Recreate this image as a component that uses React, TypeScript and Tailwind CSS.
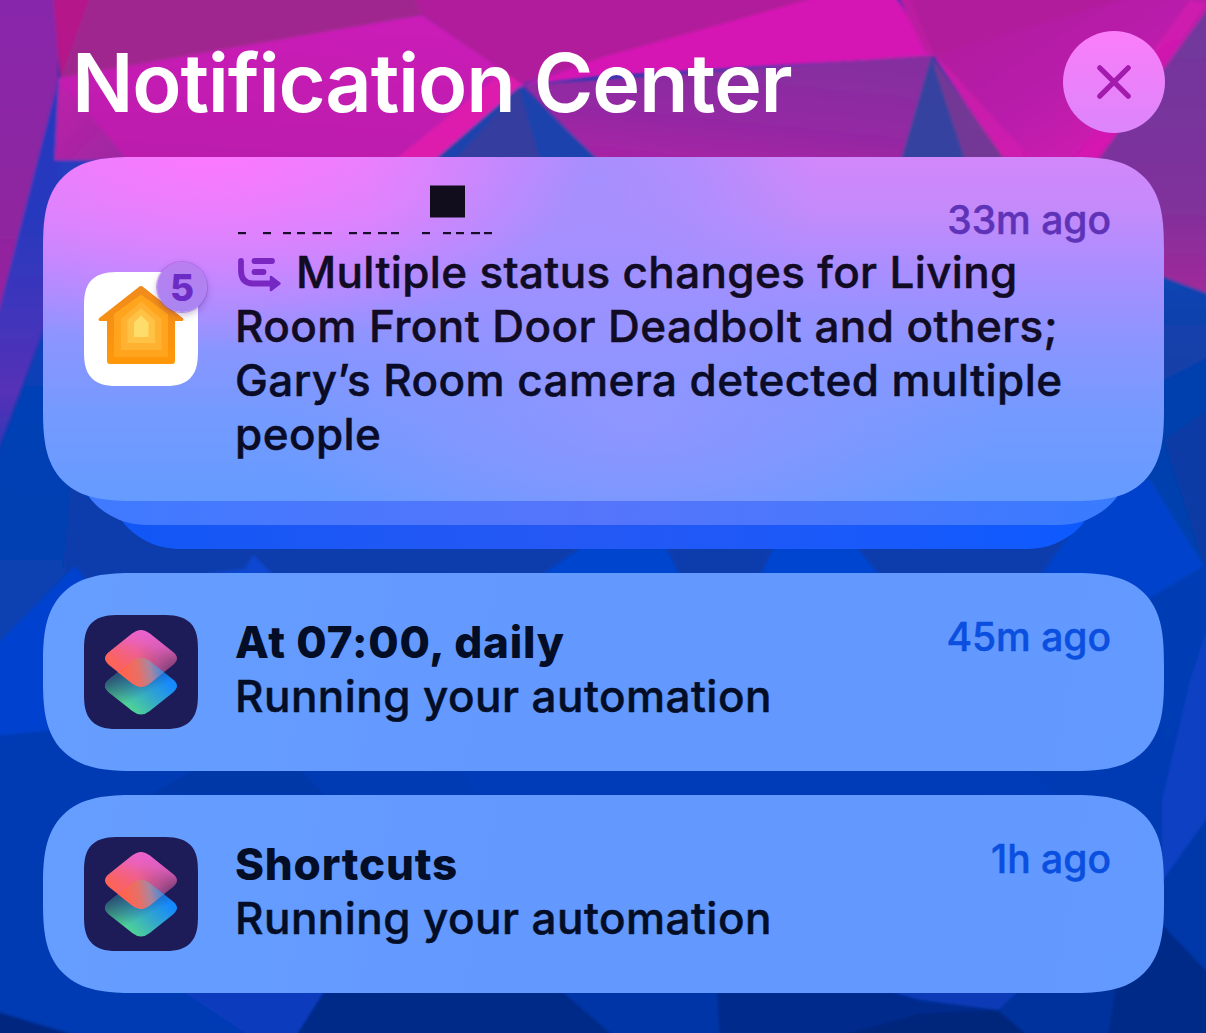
import React from "react";

type Facet = [points: string, fill: string];

const facets: Facet[] = [
  // left violet edge
  ["-20,-20 58,-20 58,85 -20,420", "url(#violet)"],
  ["55,82 60,82 56,300 -2,462 -2,1033 200,1033 200,157", "url(#leftBlue)"],
  ["59,76 -5,325 -5,458 53,305 60,160", "url(#wedge)"],
  ["52,-20 100,-20 60,80", "#b5188a"],
  ["96,-20 414,-20 422,15 60,80", "#a0258f"],
  ["59,78 422,15 525,85 432,160 55,160", "url(#magenta)"],
  ["59,84 82,105 127,160 55,160", "url(#plum)"],
  ["505,70 522,86 436,160 395,160", "#dd1aae"],
  ["408,-20 960,-20 811,0 603,58 522,84 422,15", "#b01f9b"],
  ["811,-1 870,-20 898,0 933,56 603,76 522,85 603,57", "#d517b4"],
  ["522,85 933,55 901,160 598,160", "url(#purple)"],
  ["520,86 599,160 434,160", "#1b42ad"],
  ["519,88 540,160 455,160", "#353d9f"],
  ["933,57 894,-20 1206,-20 1206,0", "#b01f9b"],
  ["890,-20 902,-20 935,56 925,52", "#bb1ea2"],
  ["933,55 1120,0 1220,-6 1100,160 1003,160", "url(#magenta2)"],
  ["932,57 1005,160 955,160", "#733795"],
  ["931,57 965,160 901,160", "#36439f"],
  ["1220,-8 1098,160 1120,270 1164,277 1220,298", "url(#rightViolet)"],
  ["1100,262 1164,277 1220,298 1220,1040 1100,1040", "#0640ae"],
  ["1150,385 1220,350 1220,298 1164,278 1150,275", "url(#rightBlue)"],
  ["1164,440 1220,400 1220,600 1204,566", "#073aa6"],
  ["70,480 90,500 600,520 1100,520 1100,600 70,600 64,560", "#083cac"],
  ["200,574 245,569 253,555 274,576", "#0b46d2"],
  ["540,576 585,545 665,545 680,576", "#0345cd"],
  ["760,576 775,545 855,545 880,576", "#0345d0"],
  ["1040,576 1062,545 1110,480 1150,480 1204,566 1146,600", "#0343cb"],
  ["-5,646 75,566 100,600 100,727 -5,736", "#0043cf"],
  ["-5,736 100,725 1220,600 1220,1040 -5,1040", "#003ab3"],
  ["150,795 195,770 300,770 325,795", "#0038a8"],
  ["460,770 1030,770 1060,795 475,795", "#003ab8"],
  ["1146,600 1204,566 1220,650 1164,750", "#003cb4"],
  ["1220,590 1190,680 1162,800 1162,884 1220,800", "#0b40c2"],
  ["1220,800 1160,884 1160,920 1220,985", "#0038aa"],
  ["1160,922 1220,985 1220,1040 1100,1040 1100,940", "#002b87"],
  ["-5,1011 78,1036 -5,1036", "#002780"],
  ["180,990 325,990 297,1036 250,1036", "#083bbd"],
  ["325,990 561,990 614,1036 296,1036", "#002b87"],
  ["561,990 718,990 718,1036 614,1036", "#0036a8"],
  ["717,990 1000,990 998,1010 1032,1036 719,1036", "#002a8c"],
  ["840,1036 920,1014 998,1010 1030,1036", "#00257b"],
  ["885,990 1025,990 998,1010 920,1000", "#083ab8"],
  ["998,1010 1020,990 1115,990 1108,1036 1028,1036", "#00339e"],
];

function Wallpaper() {
  return (
    <svg className="absolute inset-0 h-full w-full" viewBox="0 0 1206 1033" aria-hidden="true">
      <defs>
        <linearGradient id="violet" x1="0" y1="0" x2="0" y2="1">
          <stop offset="0" stopColor="#8728ac" />
          <stop offset="0.55" stopColor="#8f259f" />
          <stop offset="0.8" stopColor="#9a209c" />
        </linearGradient>
        <linearGradient id="wedge" gradientUnits="userSpaceOnUse" x1="0" y1="220" x2="0" y2="450">
          <stop offset="0" stopColor="#2839bd" />
          <stop offset="0.45" stopColor="#4234bb" />
          <stop offset="0.75" stopColor="#5530b6" />
          <stop offset="1" stopColor="#3038b8" />
        </linearGradient>
        <linearGradient id="leftBlue" gradientUnits="userSpaceOnUse" x1="0" y1="100" x2="0" y2="600">
          <stop offset="0" stopColor="#2a3abd" />
          <stop offset="0.4" stopColor="#1a3ebb" />
          <stop offset="0.6" stopColor="#0341b6" />
          <stop offset="1" stopColor="#0740b0" />
        </linearGradient>
        <linearGradient id="magenta" x1="0.6" y1="0" x2="0.4" y2="1">
          <stop offset="0" stopColor="#cb1bb8" />
          <stop offset="1" stopColor="#bb1dac" />
        </linearGradient>
        <linearGradient id="plum" x1="0" y1="0" x2="1" y2="1">
          <stop offset="0" stopColor="#bd20aa" />
          <stop offset="1" stopColor="#9c27a0" />
        </linearGradient>
        <linearGradient id="purple" x1="0.6" y1="0" x2="0.2" y2="1">
          <stop offset="0" stopColor="#852fa0" />
          <stop offset="0.6" stopColor="#9528a3" />
          <stop offset="1" stopColor="#a823a5" />
        </linearGradient>
        <linearGradient id="magenta2" gradientUnits="userSpaceOnUse" x1="980" y1="0" x2="1080" y2="157">
          <stop offset="0" stopColor="#b01f9e" />
          <stop offset="0.6" stopColor="#b81eaa" />
          <stop offset="1" stopColor="#cc19b0" />
        </linearGradient>
        <linearGradient id="rightViolet" x1="0" y1="0" x2="0" y2="1">
          <stop offset="0" stopColor="#6d399c" />
          <stop offset="0.7" stopColor="#80309b" />
          <stop offset="1" stopColor="#a3299a" />
        </linearGradient>
        <linearGradient id="rightBlue" x1="0" y1="0" x2="0" y2="1">
          <stop offset="0" stopColor="#0a44b2" />
          <stop offset="1" stopColor="#1a3ea6" />
        </linearGradient>
        <filter id="soften" x="-2%" y="-2%" width="104%" height="104%">
          <feGaussianBlur stdDeviation="1.8" />
        </filter>
      </defs>
      <rect width="1206" height="1033" fill="#043db2" />
      <g filter="url(#soften)">
        {facets.map(([points, fill], i) => (
          <polygon key={i} points={points} fill={fill} />
        ))}
        <path d="M1206 4 1098 157H1076L1190 0Z" fill="#dc18b0" opacity="0.55" />
        <path d="M933 56 1003 157H1030L950 70Z" fill="#dc18b0" opacity="0.5" />
      </g>
    </svg>
  );
}

function HomeIcon() {
  return (
    <svg viewBox="0 0 114 114" className="size-[114px]" aria-hidden="true">
      <defs>
        <linearGradient id="roof" x1="0" y1="0" x2="0" y2="1">
          <stop offset="0" stopColor="#f08a1c" />
          <stop offset="1" stopColor="#ff9808" />
        </linearGradient>
      </defs>
      <path
        d="M54.5 15.2Q57 13 59.5 15.2L99 46.2Q100.5 49 97 49H91V89Q91 92 88 92H26Q23 92 23 89V49H17Q13.500 49 15 46.200Z"
        fill="url(#roof)"
      />
      <path d="M30 42 57 22.500 84 42V85H30Z" fill="#ffa41c" />
      <path d="M37 47 57 29.500 77.500 47V78H37Z" fill="#ffb231" />
      <path d="M43.500 48 57 36.500 71 48V71H43.500Z" fill="#ffc245" />
      <path d="M50 50.500 57 43.500 64.500 50.500V65H50Z" fill="#ffdd6b" />
    </svg>
  );
}

const UPPER_TILE =
  "M48.250 18.500Q57 11.500 65.750 18.500L89 37.100Q97 43.500 89 49.900L65.750 68.500Q57 75.500 48.250 68.500L25 49.900Q17 43.500 25 37.100Z";
const LOWER_TILE =
  "M48.250 46Q57 39 65.750 46L89 64.600Q97 71 89 77.400L65.750 96Q57 103 48.250 96L25 77.400Q17 71 25 64.600Z";

function ShortcutsIcon({ id }: { id: string }) {
  return (
    <svg viewBox="0 0 114 114" className="size-[114px]" aria-hidden="true">
      <defs>
        <linearGradient id={id + "a"} gradientUnits="userSpaceOnUse" x1="22" y1="46" x2="92" y2="40">
          <stop offset="0" stopColor="#ff6450" />
          <stop offset="0.45" stopColor="#f2607c" />
          <stop offset="0.75" stopColor="#a04a8c" />
          <stop offset="1" stopColor="#4a2f66" />
        </linearGradient>
        <linearGradient id={id + "b"} gradientUnits="userSpaceOnUse" x1="60" y1="12" x2="52" y2="52">
          <stop offset="0" stopColor="#ec62dc" />
          <stop offset="0.4" stopColor="#ea62c4" stopOpacity="0.8" />
          <stop offset="1" stopColor="#f0608c" stopOpacity="0" />
        </linearGradient>
        <linearGradient id={id + "c"} gradientUnits="userSpaceOnUse" x1="48" y1="98" x2="80" y2="62">
          <stop offset="0" stopColor="#50d692" />
          <stop offset="0.5" stopColor="#35a9c8" />
          <stop offset="1" stopColor="#1488ff" />
        </linearGradient>
        <linearGradient id={id + "d"} gradientUnits="userSpaceOnUse" x1="32" y1="54" x2="48" y2="86">
          <stop offset="0" stopColor="#26406a" />
          <stop offset="1" stopColor="#26406a" stopOpacity="0" />
        </linearGradient>
        <linearGradient id={id + "e"} gradientUnits="userSpaceOnUse" x1="42" y1="62" x2="80" y2="54">
          <stop offset="0" stopColor="#ff6450" />
          <stop offset="0.35" stopColor="#e67068" />
          <stop offset="0.65" stopColor="#a886a0" />
          <stop offset="0.85" stopColor="#6488c8" />
          <stop offset="1" stopColor="#3286ea" />
        </linearGradient>
        <clipPath id={id + "f"}>
          <path d={UPPER_TILE} />
        </clipPath>
      </defs>
      <path d={LOWER_TILE} fill={`url(#${id}c)`} />
      <path d={LOWER_TILE} fill={`url(#${id}d)`} />
      <path d={UPPER_TILE} fill={`url(#${id}a)`} />
      <path d={UPPER_TILE} fill={`url(#${id}b)`} />
      <g clipPath={`url(#${id}f)`}>
        <path d={LOWER_TILE} fill={`url(#${id}e)`} />
      </g>
    </svg>
  );
}

function SummaryGlyph() {
  return (
    <svg viewBox="0 0 46 36" className="mr-[14px] ml-px inline-block h-[36px] w-[46px] align-[-5px]" aria-hidden="true">
      <g fill="none" stroke="#7a27c2" strokeWidth="5.800" strokeLinecap="round">
        <path d="M5 4V13Q5 26.500 17 26.500H35" />
        <path d="M18.500 4H36M18.500 15H27.500" />
      </g>
      <path d="M35 20 43.500 26.500 35 33Z" fill="#7429c2" stroke="#7429c2" strokeWidth="2.500" strokeLinejoin="round" />
    </svg>
  );
}

const dashes: [number, number][] = [
  [3, 8], [28, 8], [48, 8], [62, 8], [77.500, 8.500], [89, 8], [114, 8], [128, 8],
  [143, 9], [156, 8], [187, 8], [208, 8], [221, 8], [236, 9], [249, 8],
];

function RedactedTitle() {
  return (
    <svg viewBox="0 0 270 54" className="block h-[54px] w-[270px] overflow-visible" aria-hidden="true">
      <rect x="195" y="-6.500" width="35" height="32" fill="#120d1c" />
      {dashes.map(([x, w]) => (
        <rect key={x} x={x} y="40" width={w} height="2.200" fill="#180c2a" />
      ))}
    </svg>
  );
}

function AutomationCard({ title, time, id }: { title: string; time: string; id: string }) {
  return (
    <article className="flex h-[198px] rounded-[72px] bg-[linear-gradient(100deg,#669eff,#6398ff_50%,#639aff)] pr-[53px] pl-[41px] supports-[corner-shape:squircle]:rounded-[92px] supports-[corner-shape:squircle]:[corner-shape:superellipse(1.5)]">
      <div className="size-[114px] shrink-0 self-center overflow-hidden rounded-[26px] bg-[#1d1c58] supports-[corner-shape:squircle]:rounded-[36px] supports-[corner-shape:squircle]:[corner-shape:superellipse(1.5)]">
        <ShortcutsIcon id={id} />
      </div>
      <div className="ml-[37px] flex-1 pt-[42px] text-[44px] leading-[54px] whitespace-nowrap text-[#030d26]">
        <h2 className="font-extrabold tracking-[0.8px]">{title}</h2>
        <p className="font-medium tracking-[0.45px] [-webkit-text-stroke:0.5px]">Running your automation</p>
      </div>
      <time className="pt-[40px] text-[39px] leading-[48px] font-medium whitespace-nowrap text-[#0a4fe0] [-webkit-text-stroke:0.5px]">{time}</time>
    </article>
  );
}

export default function App() {
  return (
    <main className="relative h-[1033px] w-[1206px] overflow-hidden font-['Inter',sans-serif]">
      <Wallpaper />
      <div className="relative flex flex-col pr-[42px] pl-[43px]">
        <header className="flex h-[157px] items-start justify-between pt-[31px] pl-[29px]">
          <h1 className="pt-px text-[81px] leading-[102px] font-semibold tracking-[-1.2px] whitespace-nowrap text-white">Notification Center</h1>
          <button aria-label="Clear" className="-mr-px flex size-[102px] items-center justify-center rounded-full bg-linear-to-b from-[#fb7dfa] to-[#dc85fb]">
            <svg viewBox="0 0 34 34" className="size-[34px]" aria-hidden="true">
              <path d="M2.800 2.800 31.200 31.200M31.200 2.800 2.800 31.200" stroke="#a31bad" strokeWidth="5.200" strokeLinecap="round" />
            </svg>
          </button>
        </header>

        <section className="isolate flex flex-col">
          <article className="relative z-20 flex h-[344px] rounded-[72px] bg-[radial-gradient(ellipse_34%_62%_at_15%_-6%,#ff76ff_0%,#f77bffa0_45%,#f77bff00_100%),radial-gradient(ellipse_20%_70%_at_49%_6%,#9c91ffcc_0%,#9c91ff90_45%,#9c91ff00_100%),radial-gradient(ellipse_32%_50%_at_53%_76%,#9694ffd0_0%,#9694ff70_50%,#9694ff00_100%),linear-gradient(180deg,#d287fa_0%,#c58afa_15%,#a98eff_33%,#8b95ff_54%,#749aff_75%,#659bff_100%)] pr-[53px] pl-[41px] supports-[corner-shape:squircle]:rounded-[92px] supports-[corner-shape:squircle]:[corner-shape:superellipse(1.5)]">
            <div className="relative size-[114px] shrink-0 self-center">
              <div className="size-full overflow-hidden rounded-[26px] bg-white supports-[corner-shape:squircle]:rounded-[36px] supports-[corner-shape:squircle]:[corner-shape:superellipse(1.5)]">
                <HomeIcon />
              </div>
              <span className="absolute -top-[10px] -right-[9px] flex size-[50px] items-center justify-center rounded-full bg-linear-to-b from-[#b97ff0] to-[#a985f2] text-[37px] leading-none font-extrabold text-[#6d2bc5] shadow-[0_3px_7px_rgba(60,20,120,0.3),0_0_0_1px_rgba(150,90,225,0.45)]">
                5
              </span>
            </div>
            <div className="ml-[37px] w-[876px] pt-[35px]">
              <div className="flex items-start justify-between">
                <RedactedTitle />
                <time className="pt-[4px] text-[39px] leading-[48px] font-medium whitespace-nowrap text-[#5f33b8] [-webkit-text-stroke:0.5px]">33m ago</time>
              </div>
              <p className="-mt-px text-[44px] leading-[54px] font-medium tracking-[0.43px] whitespace-nowrap text-[#120b24] [-webkit-text-stroke:0.5px]">
                <SummaryGlyph />
                <span className="tracking-[0.35px]">Multiple status changes for Living</span>
                <br />
                Room Front Door Deadbolt and others;
                <br />
                <span className="text-[#0a0b26]">
                  Gary’s Room camera detected multiple
                  <br />
                  people
                </span>
              </p>
            </div>
          </article>
          <div className="relative z-10 mr-[32px] ml-[31px] -mt-[126px] h-[150px] rounded-[72px] bg-linear-to-r from-[#3e7aff] via-[#5575fb] to-[#377bff]" />
          <div className="relative z-0 mr-[64px] ml-[64px] -mt-[126px] h-[150px] rounded-[72px] bg-linear-to-r from-[#0f57f6] via-[#2558f4] via-45% to-[#0b5aff]" />
        </section>

        <div className="mt-[24px] flex flex-col gap-[24px]">
          <AutomationCard id="first" title="At 07:00, daily" time="45m ago" />
          <AutomationCard id="second" title="Shortcuts" time="1h ago" />
        </div>
      </div>
    </main>
  );
}
